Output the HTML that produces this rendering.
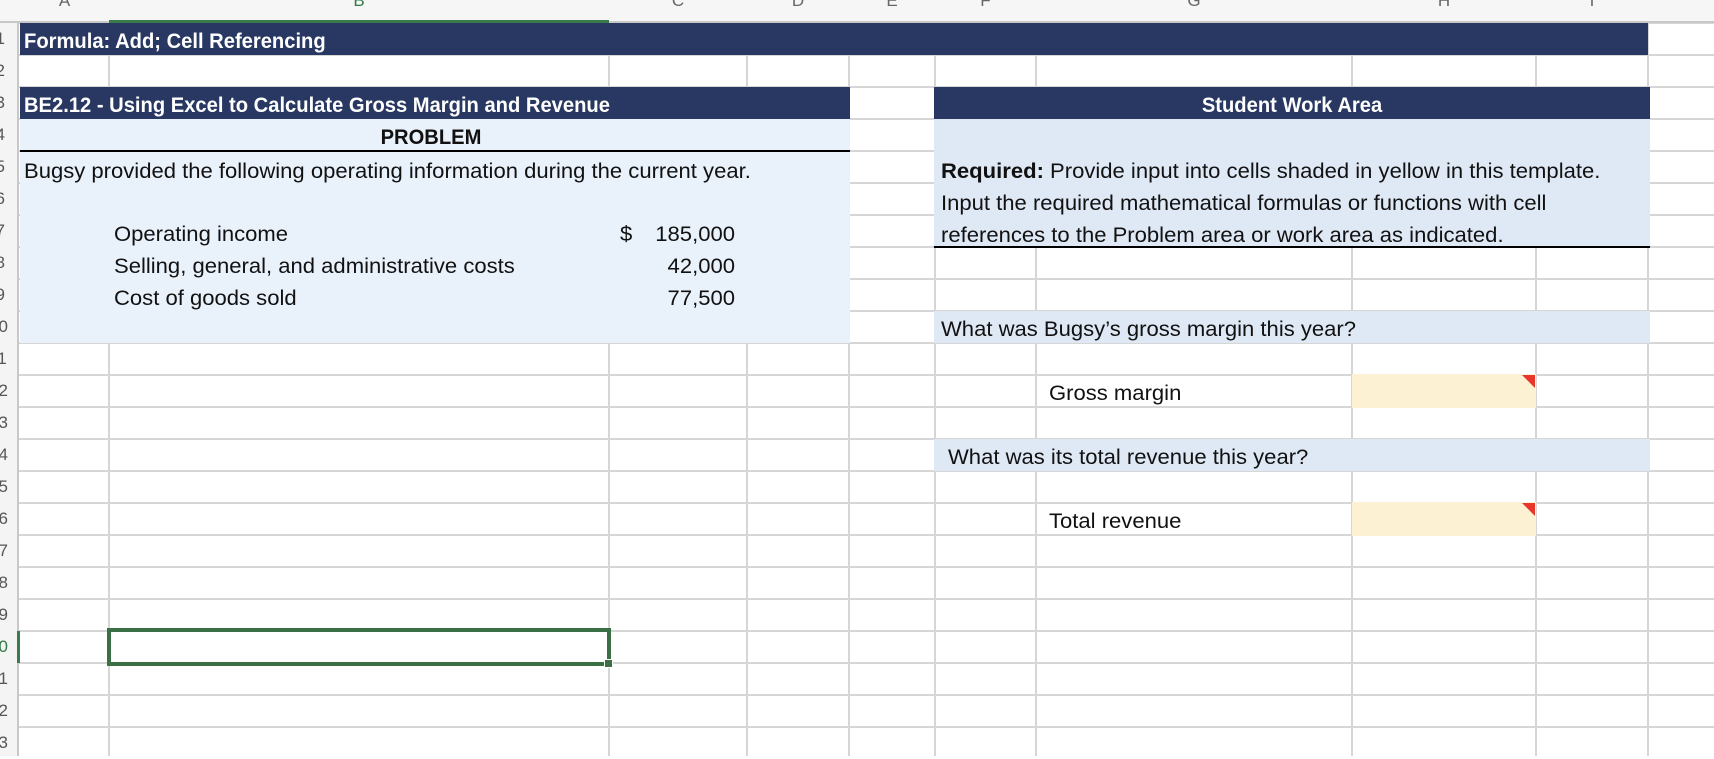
<!DOCTYPE html>
<html><head><meta charset="utf-8"><style>
*{margin:0;padding:0;box-sizing:border-box}
body{width:1714px;height:756px;overflow:hidden;background:#fff;position:relative;font-family:"Liberation Sans",sans-serif;}
.a{position:absolute}
.vl{position:absolute;top:0;height:756px;width:2px;background:#d6d6d6}
.hl{position:absolute;left:0;width:1714px;height:2px;background:#d6d6d6}
.t{position:absolute;font-size:21px;color:#111;white-space:nowrap;line-height:32px;transform-origin:left center;transform:translateY(3px) scaleX(1.05)}
.b{font-weight:bold;transform:translateY(3px) scaleX(.96)}
.w{color:#fff}
.c{transform-origin:center center;text-align:center}
.r{transform-origin:right center;text-align:right}
.ch{position:absolute;top:-9px;font-size:17px;color:#666;width:20px;text-align:center}
.rn{position:absolute;left:-11px;width:16px;text-align:right;font-size:17px;color:#555;line-height:32px}
</style></head><body>
<div id="g"></div>
<div class="a" style="left:0;top:0;width:19px;height:756px;background:#f4f4f4;border-right:2px solid #c8c8c8"></div>
<div class="a" style="left:0;top:0;width:1714px;height:23px;background:#f6f6f6;border-bottom:2px solid #c8c8c8"></div>
<div class="a" style="left:109px;top:20px;width:500px;height:3px;background:#3b7a4b"></div>
<div class="a" style="left:17px;top:631px;width:3px;height:32px;background:#3b7a4b"></div>
<div id="hd"></div>

<div class="a" style="left:20px;top:23px;width:1628px;height:32px;background:#283862"></div>
<div class="a" style="left:20px;top:87px;width:830px;height:32px;background:#283862"></div>
<div class="a" style="left:20px;top:119px;width:830px;height:224px;background:#e9f1fb"></div>
<div class="a" style="left:20px;top:150px;width:830px;height:2px;background:#000"></div>
<div class="a" style="left:934px;top:87px;width:716px;height:32px;background:#283862"></div>
<div class="a" style="left:934px;top:119px;width:716px;height:128px;background:#dfe8f5"></div>
<div class="a" style="left:934px;top:246px;width:716px;height:2px;background:#000"></div>
<div class="a" style="left:934px;top:311px;width:716px;height:32px;background:#dfe8f5"></div>
<div class="a" style="left:934px;top:439px;width:716px;height:32px;background:#dfe8f5"></div>
<div class="a" style="left:1352px;top:374px;width:184px;height:34px;background:#fdf1d3"></div>
<div class="a" style="left:1352px;top:502px;width:184px;height:34px;background:#fdf1d3"></div>
<svg class="a" style="left:1522px;top:375px" width="13" height="13"><polygon points="0,0 13,0 13,13" fill="#e8372a"/></svg>
<svg class="a" style="left:1522px;top:503px" width="13" height="13"><polygon points="0,0 13,0 13,13" fill="#e8372a"/></svg>
<div class="a" style="left:107px;top:628px;width:504px;height:38px;border:4px solid #3b7047"></div>
<div class="a" style="left:604px;top:659px;width:9px;height:9px;background:#3b7047;border:1px solid #fff"></div>

<div class="t b w" style="left:24px;top:23px">Formula: Add; Cell Referencing</div>
<div class="t b w" style="left:24px;top:87px">BE2.12 - Using Excel to Calculate Gross Margin and Revenue</div>
<div class="t b c" style="left:231px;width:400px;top:119px">PROBLEM</div>
<div class="t" style="left:24px;top:153px">Bugsy provided the following operating information during the current year.</div>
<div class="t" style="left:114px;top:216px">Operating income</div>
<div class="t" style="left:114px;top:248px">Selling, general, and administrative costs</div>
<div class="t" style="left:114px;top:280px">Cost of goods sold</div>
<div class="t" style="left:620px;top:216px">$</div>
<div class="t r" style="left:535px;width:200px;top:216px">185,000</div>
<div class="t r" style="left:535px;width:200px;top:248px">42,000</div>
<div class="t r" style="left:535px;width:200px;top:280px">77,500</div>
<div class="t b w c" style="left:1092px;width:400px;top:87px">Student Work Area</div>
<div class="t" style="left:941px;top:153px"><b>Required:</b> Provide input into cells shaded in yellow in this template.</div>
<div class="t" style="left:941px;top:185px">Input the required mathematical formulas or functions with cell</div>
<div class="t" style="left:941px;top:217px">references to the Problem area or work area as indicated.</div>
<div class="t" style="left:941px;top:311px">What was Bugsy’s gross margin this year?</div>
<div class="t" style="left:1049px;top:375px">Gross margin</div>
<div class="t" style="left:948px;top:439px">What was its total revenue this year?</div>
<div class="t" style="left:1049px;top:503px">Total revenue</div>
<script>
var cols=[109,609,747,849,935,1036,1352,1536,1648];
var h='';
cols.forEach(function(x){h+='<div class="vl" style="left:'+(x-1)+'px"></div>';});
for(var i=0;i<23;i++){h+='<div class="hl" style="top:'+(22+32*i)+'px"></div>';}
document.getElementById('g').innerHTML=h;
var all=[20].concat(cols),L='ABCDEFGHI',hd='';
for(var j=0;j<9;j++){var c=(all[j]+all[j+1])/2;hd+='<div class="ch" style="left:'+(c-10)+'px;'+(j==1?'color:#2f7a45':'')+'">'+L[j]+'</div>';}
for(var r=1;r<=23;r++){hd+='<div class="rn" style="top:'+(23+32*(r-1))+'px;'+(r==20?'color:#2f7a45':'')+'">'+r+'</div>';}
document.getElementById('hd').innerHTML=hd;
</script>
</body></html>
